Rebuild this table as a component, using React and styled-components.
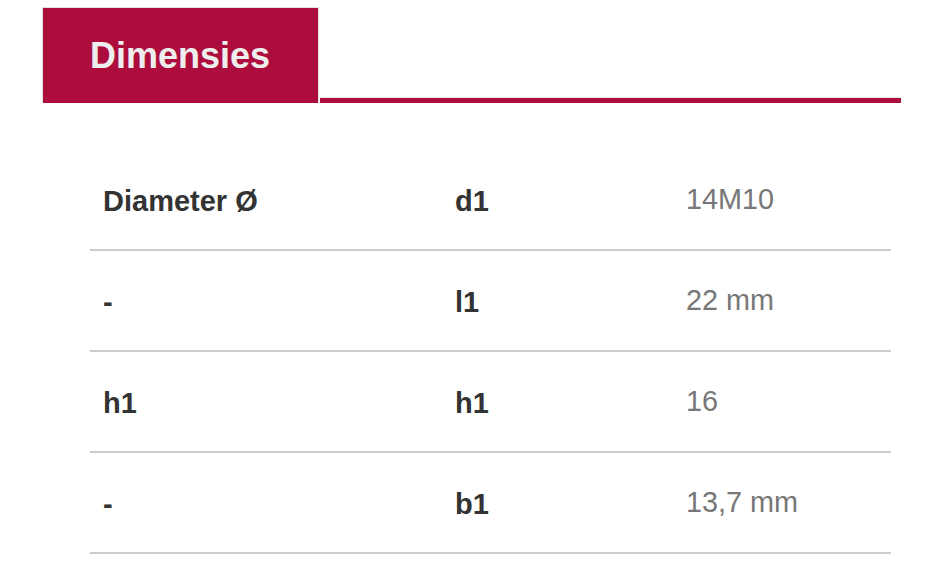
import React from "react";
import styled, { createGlobalStyle } from "styled-components";

const Global = createGlobalStyle`
  html, body { margin: 0; padding: 0; background: #ffffff; }
  body { font-family: "Liberation Sans", Arial, sans-serif; }
`;

const Page = styled.div`
  width: 940px;
  height: 587px;
  box-sizing: border-box;
  padding: 7px 39px 0 42px;
  overflow: hidden;
`;

const TabBar = styled.div`
  display: flex;
  align-items: flex-end;
  height: 96px;
`;

const Tab = styled.div`
  box-sizing: border-box;
  width: 277px;
  height: 96px;
  background: #ad0d3c;
  border: 1px solid #e2e2e2;
  border-bottom: none;
  display: flex;
  align-items: center;
  padding-left: 47px;
  color: #eeeeee;
  font-size: 36px;
  font-weight: 700;
`;

const Rule = styled.div`
  flex: 1;
  height: 6px;
  margin-left: 1px;
  background: #ad0d3c;
  border-top: 1px solid #e8e8e8;
  box-sizing: border-box;
`;

const Table = styled.div`
  margin: 47px 0 0 48px;
  width: 801px;
`;

const Row = styled.div`
  display: grid;
  grid-template-columns: 352px 231px 1fr;
  align-items: center;
  height: 99px;
  padding-left: 13px;
  border-bottom: 2px solid #cccccc;
`;

const Label = styled.div`
  font-size: 29px;
  font-weight: 700;
  color: #333333;
  padding-top: 3px;
`;

const Value = styled.div`
  font-size: 28.8px;
  color: #777777;
  margin-top: -1px;
`;

const rows = [
  ["Diameter Ø", "d1", "14M10"],
  ["-", "l1", "22 mm"],
  ["h1", "h1", "16"],
  ["-", "b1", "13,7 mm"],
];

export default function App() {
  return (
    <>
      <Global />
      <Page>
        <TabBar>
          <Tab>Dimensies</Tab>
          <Rule />
        </TabBar>
        <Table>
          {rows.map(([a, b, c], i) => (
            <Row key={i}>
              <Label>{a}</Label>
              <Label>{b}</Label>
              <Value>{c}</Value>
            </Row>
          ))}
        </Table>
      </Page>
    </>
  );
}
